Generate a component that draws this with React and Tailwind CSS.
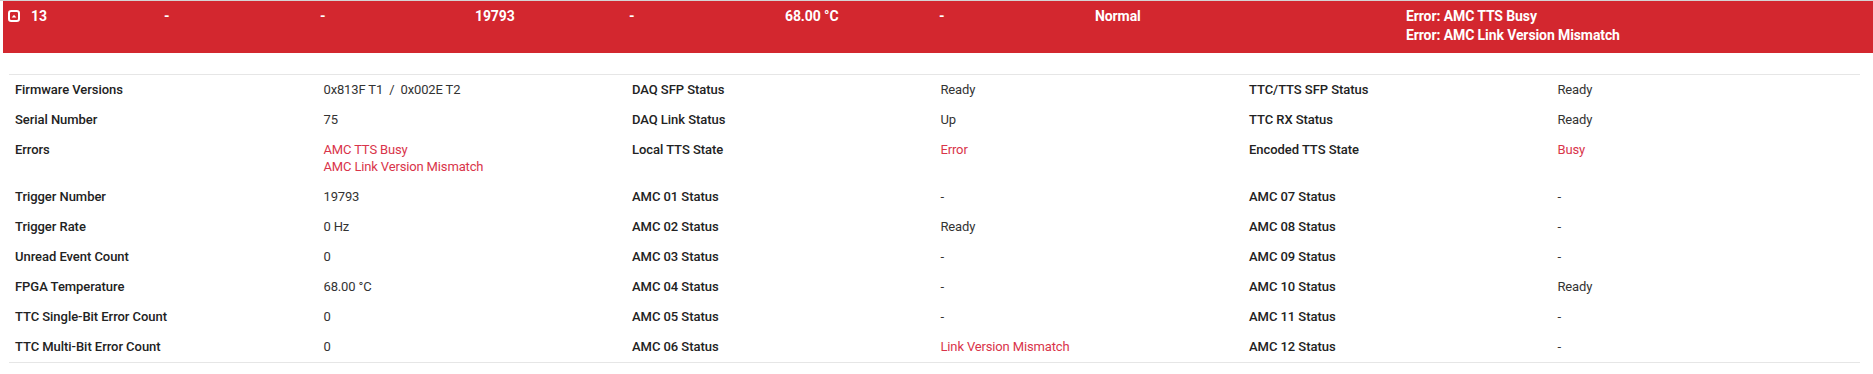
import React from "react";

const RED = "text-[#d9344a]";

const rows = [
  ["Firmware Versions", "0x813F T1  /  0x002E T2", "DAQ SFP Status", "Ready", "TTC/TTS SFP Status", "Ready"],
  ["Serial Number", "75", "DAQ Link Status", "Up", "TTC RX Status", "Ready"],
  ["Errors", { red: true, lines: ["AMC TTS Busy", "AMC Link Version Mismatch"] }, "Local TTS State", { red: true, lines: ["Error"] }, "Encoded TTS State", { red: true, lines: ["Busy"] }],
  ["Trigger Number", "19793", "AMC 01 Status", "-", "AMC 07 Status", "-"],
  ["Trigger Rate", "0 Hz", "AMC 02 Status", "Ready", "AMC 08 Status", "-"],
  ["Unread Event Count", "0", "AMC 03 Status", "-", "AMC 09 Status", "-"],
  ["FPGA Temperature", "68.00 °C", "AMC 04 Status", "-", "AMC 10 Status", "Ready"],
  ["TTC Single-Bit Error Count", "0", "AMC 05 Status", "-", "AMC 11 Status", "-"],
  ["TTC Multi-Bit Error Count", "0", "AMC 06 Status", { red: true, lines: ["Link Version Mismatch"] }, "AMC 12 Status", "-"],
];

function CaretSquareUp() {
  return (
    <svg width="12" height="12" viewBox="0 0 12 12" className="shrink-0">
      <rect x="1" y="1" width="10" height="10" rx="2.2" fill="none" stroke="#fff" strokeWidth="2" />
      <polygon points="3.6,7.4 6,4.8 8.4,7.4" fill="#fff" />
    </svg>
  );
}

function Value({ v }) {
  if (typeof v === "string") return <div className="text-[#333333] whitespace-pre">{v}</div>;
  return (
    <div className={v.red ? RED : "text-[#333333]"}>
      {v.lines.map((l, i) => (
        <div key={i}>{l}</div>
      ))}
    </div>
  );
}

export default function App() {
  return (
    <div className="w-[1873px] bg-white font-['Roboto',sans-serif] border-t border-[#d4d4d4]">
      <div className="ml-[3px] h-[52px] bg-[#d3272f] text-white font-bold text-[14px] leading-[19px] tracking-[-0.1px] grid grid-cols-[155px_156px_155px_154px_156px_154px_156px_311px_473px]">
        <div className="pt-[6px] pl-[5px] flex items-start">
          <div className="mt-[3px] mr-[11px]">
            <CaretSquareUp />
          </div>
          <span>13</span>
        </div>
        <div className="pt-[6px] pl-[6px]">-</div>
        <div className="pt-[6px] pl-[6px]">-</div>
        <div className="pt-[6px] pl-[6px]">19793</div>
        <div className="pt-[6px] pl-[6px]">-</div>
        <div className="pt-[6px] pl-[6px]">68.00 °C</div>
        <div className="pt-[6px] pl-[6px]">-</div>
        <div className="pt-[6px] pl-[6px]">Normal</div>
        <div className="pt-[6px] pl-[6px]">
          <div>Error: AMC TTS Busy</div>
          <div>Error: AMC Link Version Mismatch</div>
        </div>
      </div>
      <div className="mt-[21px] ml-[9px] w-[1851px] border-t border-b border-[#e6e6e6] text-[13px] leading-[17px]">
        {rows.map((r, i) => (
          <div key={i} className="grid grid-cols-6">
            {r.map((c, j) => (
              <div key={j} className="pl-[6px] pt-[6px] pb-[7px]">
                {j % 2 === 0 ? (
                  <div className="font-medium text-[#222222] tracking-[-0.05px]">{c}</div>
                ) : (
                  <div className="tracking-[-0.15px]">
                    <Value v={c} />
                  </div>
                )}
              </div>
            ))}
          </div>
        ))}
      </div>
      <div className="h-[11px]" />
    </div>
  );
}
